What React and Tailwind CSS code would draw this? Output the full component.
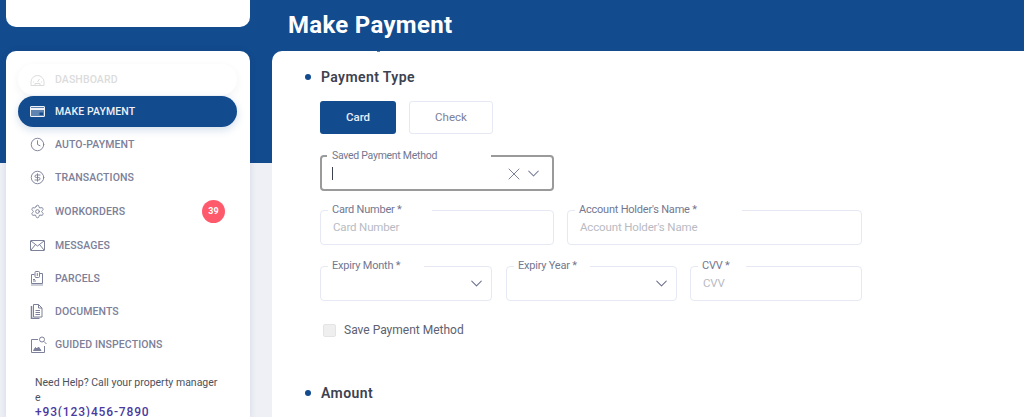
import React from 'react';
import { Clock, CircleDollarSign, Settings, X, ChevronDown } from 'lucide-react';

const CardIcon = ({ className }) => (
  <svg width="15" height="11" viewBox="0 0 15 11" className={className} fill="none" stroke="currentColor">
    <rect x="0.5" y="0.5" width="14" height="10" rx="0.5" fill="currentColor" fillOpacity="0.35" />
    <rect x="0.5" y="2" width="14" height="2" fill="currentColor" stroke="none" />
    <rect x="9.500" y="6.500" width="3.500" height="2.500" fill="#124b8e" stroke="none" />
  </svg>
);

const GaugeIcon = ({ className }) => (
  <svg width="15" height="12" viewBox="0 0 15 12" className={className} fill="none" stroke="currentColor">
    <path d="M1 11.500V8a6.500 6.500 0 0 1 13 0v3.500z" />
    <path d="M7.500 8l2-3M3 8h1M11 8h1M5 11v-1.500h5V11" />
  </svg>
);

const EnvelopeIcon = ({ className }) => (
  <svg width="15" height="11" viewBox="0 0 15 11" className={className} fill="none" stroke="currentColor">
    <rect x="0.500" y="0.500" width="14" height="10" rx="0.500" />
    <path d="M1 1l6.500 5L14 1M1 10l4.500-5.500M14 10L9.500 4.500" />
  </svg>
);

const ParcelIcon = ({ className }) => (
  <svg width="14" height="15" viewBox="0 0 14 15" className={className} fill="none" stroke="currentColor">
    <path d="M1.500 3.500h3M9.500 2.500h3v10h-11v-9" />
    <rect x="5" y="0.500" width="4.500" height="6" rx="1" />
    <path d="M7.300 2v3M3 10h3M3 8.500h2" />
    <path d="M1 14h12" strokeWidth="1.500" opacity="0.5" />
  </svg>
);

const DocIcon = ({ className }) => (
  <svg width="13" height="15" viewBox="0 0 13 15" className={className} fill="none" stroke="currentColor">
    <path d="M1.500 2v12.500h8" strokeWidth="1.500" />
    <path d="M3.500 0.500h5l3.500 3.500v9h-8.500zM8.500 0.500V4H12" />
    <path d="M5.500 6.500h4.500M5.500 8.500h4.500M5.500 10.500h4.500" />
  </svg>
);

const InspectIcon = ({ className }) => (
  <svg width="17" height="18" viewBox="0 0 17 18" className={className} fill="none" stroke="currentColor">
    <path d="M8 3.500H1.500v13h13V10" />
    <circle cx="12" cy="3.500" r="2.500" />
    <path d="M14 5.500l2.500 2.500" />
    <path d="M3.500 14.500l2-3 1.500 1.500 1.500-2 2.500 3.500z" fill="currentColor" />
  </svg>
);

const navItems = [
  { label: 'DASHBOARD', icon: GaugeIcon, faded: true },
  { label: 'MAKE PAYMENT', icon: CardIcon, active: true },
  { label: 'AUTO-PAYMENT', icon: Clock },
  { label: 'TRANSACTIONS', icon: CircleDollarSign },
  { label: 'WORKORDERS', icon: Settings, badge: 39 },
  { label: 'MESSAGES', icon: EnvelopeIcon },
  { label: 'PARCELS', icon: ParcelIcon },
  { label: 'DOCUMENTS', icon: DocIcon },
  { label: 'GUIDED INSPECTIONS', icon: InspectIcon },
];

function NavRow({ item }) {
  const Icon = item.icon;
  let tone = 'text-[#7c8098]';
  if (item.active) tone = 'bg-[#124b8e] text-[#eef1f7] shadow-[0_3px_8px_rgba(18,75,142,0.18)]';
  if (item.faded) tone = 'mb-[-1px] text-[#dcdcdc] shadow-[0_3px_8px_rgba(40,50,90,0.06)]';

  return (
    <div className={`flex items-center rounded-full pl-[12px] pr-[12px] ${item.badge ? 'h-[33px]' : 'h-[31px]'} ${tone}`}>
      <span className="flex w-[25px] shrink-0 justify-start">
        <Icon size={15} strokeWidth={1.500} />
      </span>
      <span className="text-[10.500px] font-medium tracking-[0.1px]">{item.label}</span>
      {item.badge && (
        <span className="ml-auto flex h-[23px] w-[23px] items-center justify-center rounded-full bg-[#ff5a6c] text-[9px] font-bold text-white">
          {item.badge}
        </span>
      )}
    </div>
  );
}

function Field({ label, notch, placeholder, select, className }) {
  return (
    <div className={`relative h-[35px] rounded-[4px] border border-[#e6e9f4] ${className}`}>
      <span className={`absolute left-[7px] top-[-9px] h-[16px] bg-white pl-[4px] text-[11px] leading-[16px] tracking-[-0.22px] text-[#73778f] ${notch}`}>
        {label} *
      </span>
      {placeholder && (
        <div className="pl-[12px] pt-[8px] text-[11.500px] leading-[16px] tracking-[-0.15px] text-[#b9bbc3]">{placeholder}</div>
      )}
      {select && (
        <ChevronDown size={19} strokeWidth={1.300} className="absolute right-[5px] top-[7px] text-[#6b7089]" />
      )}
    </div>
  );
}

function SectionTitle({ children }) {
  return (
    <div className="flex items-center gap-[10px] pl-[33px]">
      <span className="h-[6px] w-[6px] rounded-full bg-[#124b8e]" />
      <h3 className="text-[14px] font-semibold leading-[18px] tracking-[0.4px] text-[#3d4250]">{children}</h3>
    </div>
  );
}

export default function App() {
  return (
    <div className="flex h-screen w-full overflow-hidden bg-[linear-gradient(#124b8e_163px,#eef0f6_163px)] font-['Roboto',sans-serif]">
      {/* sidebar */}
      <aside className="ml-[6px] flex w-[244px] shrink-0 flex-col gap-[24px]">
        <div className="h-[27px] shrink-0 rounded-b-[10px] bg-white" />
        <nav className="flex-1 rounded-t-[10px] bg-white pl-[12px] pr-[13px] pt-[13px] shadow-[0_0_6px_rgba(40,50,90,0.12)]">
          <div className="flex flex-col gap-[2px]">
            {navItems.map((item) => (
              <NavRow key={item.label} item={item} />
            ))}
          </div>
          <div className="pl-[17px] pt-[15px] text-[10.500px] leading-[15px] text-[#4c5160]">
            <p>
              Need Help? Call your property manager
              <br />e
            </p>
            <p className="text-[12px] font-medium leading-[14px] tracking-[0.85px] text-[#4a3a9e]">+93(123)456-7890</p>
          </div>
        </nav>
      </aside>

      {/* main */}
      <main className="relative ml-[22px] flex min-w-0 flex-1 flex-col">
        <header className="flex h-[51px] shrink-0 items-center pl-[16px] pb-[2px]">
          <h1 className="text-[24px] font-bold tracking-[0.3px] text-white">Make Payment</h1>
        </header>
        <span className="absolute left-[105px] top-[50px] h-[2px] w-[3px] bg-[#124b8e]/70" />
        <section className="flex-1 rounded-tl-[10px] bg-white pt-[17px]">
          <SectionTitle>Payment Type</SectionTitle>

          <div className="pl-[48px]">
            <div className="mt-[15px] flex gap-[13px]">
              <button className="h-[33px] w-[76px] rounded-[3px] bg-[#124b8e] text-[11.500px] font-medium text-[#e8edf5]">Card</button>
              <button className="h-[33px] w-[84px] rounded-[3px] border border-[#e6e9f4] bg-white text-[11.500px] text-[#7c8098]">Check</button>
            </div>

            <div className="relative mt-[21px] h-[36px] w-[234px] rounded-[4px] border-2 border-[#9a9a9a]">
              <span className="absolute left-[5px] top-[-9px] h-[16px] w-[164px] bg-white pl-[5px] text-[10.500px] leading-[16px] tracking-[-0.28px] text-[#73778f]">
                Saved Payment Method
              </span>
              <span className="absolute left-[10px] top-[10px] h-[13px] w-px bg-[#3d4250]" />
              <X size={20} strokeWidth={1.200} className="absolute right-[28px] top-[7px] text-[#7c8098]" />
              <ChevronDown size={19} strokeWidth={1.300} className="absolute right-[9px] top-[7px] text-[#7c8098]" />
            </div>

            <div className="mt-[19px] flex w-[542px] gap-[13px]">
              <Field label="Card Number" notch="w-[104px]" placeholder="Card Number" className="w-[234px]" />
              <Field label="Account Holder's Name" notch="w-[167px]" placeholder="Account Holder's Name" className="flex-1" />
            </div>

            <div className="mt-[21px] flex w-[542px]">
              <Field label="Expiry Month" notch="w-[96px]" select className="w-[172px]" />
              <Field label="Expiry Year" notch="w-[76px]" select className="ml-[14px] w-[171px]" />
              <Field label="CVV" notch="w-[48px]" placeholder="CVV" className="ml-[13px] flex-1" />
            </div>

            <label className="mt-[21px] flex items-center gap-[8px] pl-[3px]">
              <span className="h-[13px] w-[13px] rounded-[2px] border border-[#e4e4e4] bg-[#efefef]" />
              <span className="text-[12px] leading-[16px] text-[#5d6170]">Save Payment Method</span>
            </label>
          </div>

          <div className="mt-[46px]">
            <SectionTitle>Amount</SectionTitle>
          </div>
        </section>
      </main>
    </div>
  );
}
